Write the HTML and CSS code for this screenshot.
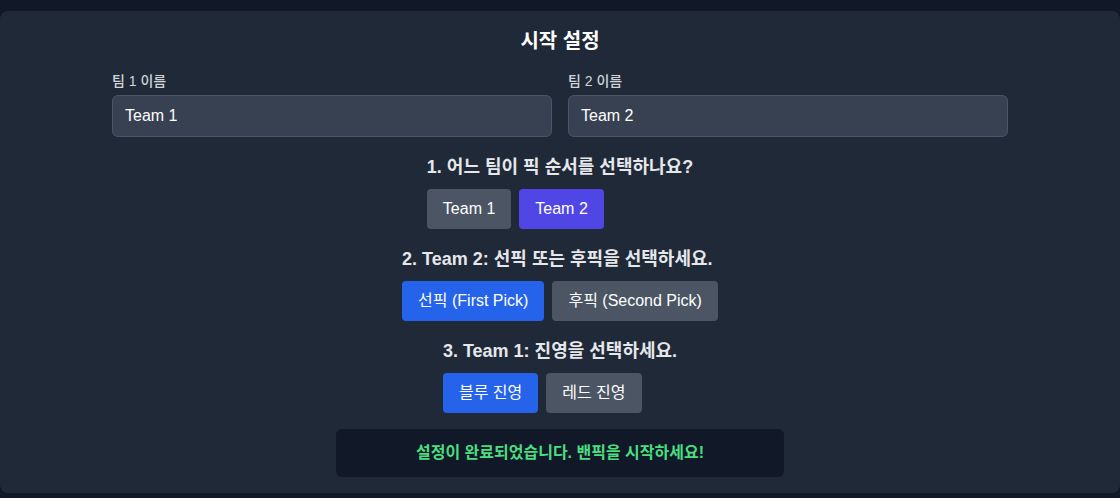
FILE: index.html
```html
<!DOCTYPE html>
<html lang="ko">
<head>
  <meta charset="UTF-8" />
  <meta name="viewport" content="width=device-width, initial-scale=1.0"/>
  <title>시작 설정</title>
  <link rel="stylesheet" href="styles.css">
</head>
<body>
  <section class="setup">
    <h2 class="setup-title">시작 설정</h2>

    <div class="team-names">
      <div class="field">
        <label for="team1">팀 1 이름</label>
        <input type="text" id="team1" value="Team 1" />
      </div>
      <div class="field">
        <label for="team2">팀 2 이름</label>
        <input type="text" id="team2" value="Team 2" />
      </div>
    </div>

    <div class="step">
      <h3>1. 어느 팀이 픽 순서를 선택하나요?</h3>
      <div class="choices">
        <button class="btn">Team 1</button>
        <button class="btn btn-indigo">Team 2</button>
      </div>
    </div>

    <div class="step">
      <h3>2. Team 2: 선픽 또는 후픽을 선택하세요.</h3>
      <div class="choices">
        <button class="btn btn-blue">선픽 (First Pick)</button>
        <button class="btn">후픽 (Second Pick)</button>
      </div>
    </div>

    <div class="step">
      <h3>3. Team 1: 진영을 선택하세요.</h3>
      <div class="choices">
        <button class="btn btn-blue">블루 진영</button>
        <button class="btn">레드 진영</button>
      </div>
    </div>

    <div class="done">설정이 완료되었습니다. 밴픽을 시작하세요!</div>
  </section>
</body>
</html>
```

FILE: styles.css
```css
* {
  box-sizing: border-box;
  font-family: "Liberation Sans", "Noto Sans CJK KR", sans-serif;
}

body {
  margin: 0;
  padding-top: 11px;
  background-color: #111827;
  color: #e5e7eb;
  min-height: 100vh;
}

.setup {
  background: #1f2937;
  border-radius: 8px;
  padding: 16px;
}

.setup-title {
  margin: 0 0 16px;
  text-align: center;
  color: #ffffff;
  font-size: 20px;
  line-height: 28px;
  font-weight: 700;
}

.team-names {
  display: grid;
  grid-template-columns: 1fr 1fr;
  gap: 16px;
  max-width: 896px;
  margin: 0 auto;
}

.field label {
  display: block;
  margin-bottom: 4px;
  font-size: 14px;
  line-height: 20px;
  font-weight: 500;
  color: #d1d5db;
}

.field input {
  display: block;
  width: 100%;
  padding: 8px 12px;
  background: #374151;
  border: 1px solid #4b5563;
  border-radius: 6px;
  color: #ffffff;
  font-size: 16px;
  line-height: 24px;
}

/* 각 단계: 가운데 정렬된 블록, 안쪽은 왼쪽 정렬 */
.step {
  width: fit-content;
  margin: 16px auto 0;
}

.step h3 {
  margin: 0 0 8px;
  font-size: 18px;
  line-height: 28px;
  font-weight: 700;
  color: #e5e7eb;
}

.choices {
  display: flex;
  gap: 8px;
}

.btn {
  padding: 8px 16px;
  background-color: #4b5563;
  color: #ffffff;
  border: none;
  border-radius: 4px;
  font-size: 16px;
  line-height: 24px;
  cursor: pointer;
}

.btn-indigo {
  background-color: #4f46e5;
}

.btn-blue {
  background-color: #2563eb;
}

.done {
  max-width: 448px;
  margin: 16px auto 0;
  padding: 12px;
  background: #111827;
  border-radius: 6px;
  text-align: center;
  color: #4ade80;
  font-size: 16px;
  line-height: 24px;
  font-weight: 700;
}
```
